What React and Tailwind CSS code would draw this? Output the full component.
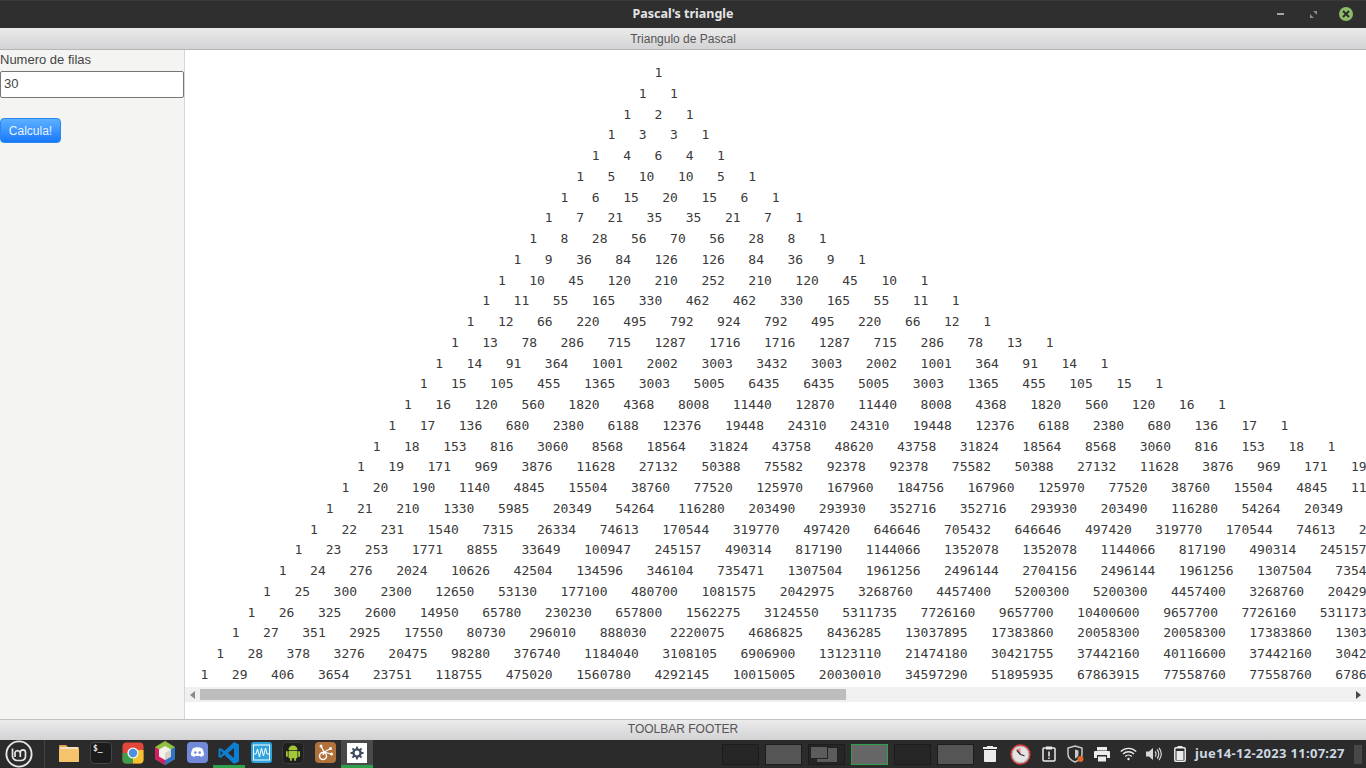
import React from 'react';

// pascal rows, padded so the triangle is centered like the original text output
const buildRows = (total) => {
  const rows = [];
  let row = [1];
  for (let i = 0; i < total; i++) {
    rows.push(' '.repeat((total - 1 - i) * 2) + row.join('   '));
    const next = [1];
    for (let j = 1; j < row.length; j++) next.push(row[j - 1] + row[j]);
    next.push(1);
    row = next;
  }
  return rows;
};

const MintLogo = () => (
  <svg width="28" height="28" viewBox="0 0 28 28" fill="none" stroke="#e6e6e6">
    <circle cx="14" cy="14" r="12.6" strokeWidth="1.9" />
    <path d="M7.500 8.500v7.500a4.500 4.500 0 0 0 4.500 4.500h4.500a4.500 4.500 0 0 0 4-4.500v-3.500a2.600 2.600 0 0 0-5.200 0v4.500M15 12.500a2.600 2.600 0 0 0-5 0v4.500" strokeWidth="1.700" />
  </svg>
);

const FolderIcon = () => (
  <svg width="22" height="20" viewBox="0 0 22 20">
    <path d="M1 3a1 1 0 0 1 1-1h6l2 2h10a1 1 0 0 1 1 1v13a1 1 0 0 1-1 1H2a1 1 0 0 1-1-1z" fill="#e0a556" />
    <rect x="2" y="4" width="18" height="2" fill="#f3e3c4" />
    <rect x="1" y="6" width="20" height="13" rx="1" fill="#f6c36d" />
  </svg>
);

const TerminalIcon = () => (
  <div className="w-[22px] h-[22px] rounded-[4px] bg-[#1c1c1c] border border-[#454545] pl-[2px] text-[8px] leading-[12px] font-bold text-[#e8e8e8] font-['DejaVu_Sans_Mono',monospace]">
    $_
  </div>
);

const ChromeIcon = () => (
  <svg width="22" height="22" viewBox="0 0 22 22">
    <rect x="0.5" y="0.5" width="21" height="21" rx="4" fill="#e0483b" />
    <path d="M0.5 11v6.5a4 4 0 0 0 4 4H11L11 11z" fill="#3f9d4a" />
    <path d="M11 11v10.5h6.5a4 4 0 0 0 4-4V8H11z" fill="#f4c430" />
    <circle cx="11" cy="11" r="5.6" fill="#f2f2f2" />
    <circle cx="11" cy="11" r="4.2" fill="#4d8fe0" />
  </svg>
);

const BoxIcon = () => (
  <svg width="22" height="24" viewBox="0 0 22 24">
    <path d="M11 0l10 6v12l-10 6-10-6V6z" fill="#8fbf3f" />
    <path d="M1 6l10 6v12l-10-6z" fill="#d11f62" />
    <path d="M21 6l-10 6v12l10-6z" fill="#2e74c9" />
    <path d="M11 5l6 3.5v7L11 19l-6-3.5v-7z" fill="#f4f1ea" />
    <path d="M11 12l6-3.5v7L11 19z" fill="#d9d3c6" />
  </svg>
);

const DiscordIcon = () => (
  <svg width="21" height="21" viewBox="0 0 21 21">
    <rect width="21" height="21" rx="4" fill="#7289da" />
    <path d="M6 6.2c3-1.3 6-1.3 9 0 1.3 2 2 4.2 2 7-1 .9-2.1 1.4-3.2 1.7l-.8-1.2c-1.700.5-3.300.5-5 0l-.8 1.200C6.100 14.600 5 14.100 4 13.200c0-2.800.7-5 2-7z" fill="#fff" />
    <circle cx="8.300" cy="10.600" r="1.300" fill="#7289da" />
    <circle cx="12.700" cy="10.600" r="1.300" fill="#7289da" />
  </svg>
);

const VsCodeIcon = () => (
  <svg width="22" height="22" viewBox="0 0 22 22">
    <path d="M16 0l5 2.500v17L16 22 6.500 13 2.500 16 .5 15V7l2-1 4 3z" fill="#0e7fd0" />
    <path d="M16 6l-6 5 6 5z" fill="#2b2b2b" />
    <path d="M2.500 8.500v5L5 11z" fill="#2b2b2b" />
  </svg>
);

const WaveIcon = () => (
  <svg width="21" height="21" viewBox="0 0 21 21" fill="none">
    <rect width="21" height="21" rx="3" fill="#2ea3dc" />
    <rect x="2.500" y="3" width="16" height="15" stroke="#fff" strokeWidth="1" />
    <path d="M3 12h2l1.500-5 2 8 2-9 2 8 2-8 1.500 6h2" stroke="#fff" strokeWidth="1" />
  </svg>
);

const AndroidIcon = () => (
  <svg width="22" height="22" viewBox="0 0 22 22">
    <rect x="0.500" y="0.500" width="21" height="21" rx="4" fill="#1f1f1f" stroke="#3a3a3a" />
    <g fill="#a4c639">
      <path d="M6.500 8a4.500 4.500 0 0 1 9 0z" />
      <rect x="6.500" y="8.800" width="9" height="7.500" rx="1" />
      <rect x="4" y="9" width="1.800" height="6" rx="0.900" />
      <rect x="16.200" y="9" width="1.800" height="6" rx="0.900" />
      <rect x="8" y="15" width="1.800" height="4" rx="0.900" />
      <rect x="12.200" y="15" width="1.800" height="4" rx="0.900" />
    </g>
  </svg>
);

const NodesIcon = () => (
  <svg width="21" height="21" viewBox="0 0 21 21" fill="none">
    <rect width="21" height="21" rx="4" fill="#b0713a" />
    <path d="M6 4l3 6 6-3M9 10l7 2M9 10l-1 3" stroke="#fff" strokeWidth="1.300" />
    <circle cx="6" cy="4" r="1.500" fill="#fff" />
    <circle cx="15.500" cy="6.500" r="1.500" fill="#fff" />
    <circle cx="16.500" cy="12" r="1.500" fill="#fff" />
    <circle cx="8" cy="14" r="3.500" stroke="#fff" strokeWidth="1.500" />
  </svg>
);

const GearTile = () => (
  <div className="w-[20px] h-[20px] bg-white flex items-center justify-center">
    <svg width="14" height="14" viewBox="0 0 14 14" fill="none">
      <circle cx="7" cy="7" r="3.600" stroke="#3f4b5e" strokeWidth="2.400" />
      <path d="M7 .5v2.500M7 11v2.500M.5 7H3M11 7h2.500M2.400 2.400l1.800 1.800M9.800 9.800l1.800 1.800M2.400 11.600l1.800-1.800M9.800 4.200l1.800-1.800" stroke="#3f4b5e" strokeWidth="1.800" />
    </svg>
  </div>
);

const TrashIcon = () => (
  <svg width="14" height="16" viewBox="0 0 14 16" fill="#ececec">
    <rect x="0" y="1" width="14" height="2" />
    <rect x="4" y="0" width="6" height="1.500" />
    <path d="M1 4h12v11a1 1 0 0 1-1 1H2a1 1 0 0 1-1-1z" />
  </svg>
);

const ClockIcon = () => (
  <svg width="21" height="21" viewBox="0 0 21 21" fill="none">
    <circle cx="10.500" cy="10.500" r="9.500" fill="#e4e4e4" stroke="#e0333a" strokeWidth="1.300" />
    <circle cx="10.500" cy="10.500" r="8.300" stroke="#9a9a9a" strokeWidth="0.800" />
    <path d="M10.500 10.500L5.500 6a7 7 0 0 1 5-2z" fill="#e88a88" />
    <path d="M10.500 10.500L7 6.500M10.500 10.500l4 1.200" stroke="#2a2a2a" strokeWidth="1.200" />
  </svg>
);

const ClipboardIcon = () => (
  <svg width="14" height="16" viewBox="0 0 14 16" fill="none">
    <rect x="1" y="2" width="12" height="13" rx="1" stroke="#ececec" strokeWidth="1.500" />
    <rect x="4" y="0.500" width="6" height="3" fill="#ececec" />
    <path d="M7 5.500v5M7 11.500v1.500" stroke="#ececec" strokeWidth="1.500" />
  </svg>
);

const ShieldIcon = () => (
  <svg width="18" height="18" viewBox="0 0 18 18" fill="none">
    <path d="M8 1l7 2v6c0 4-3 6.500-7 8-4-1.500-7-4-7-8V3z" stroke="#c9c9c9" strokeWidth="1.500" />
    <path d="M8 4.500l3.500 1v3.500c0 2-1.500 3.500-3.500 4.500z" fill="#c9c9c9" />
    <circle cx="13.500" cy="14" r="3" fill="#e0692a" />
  </svg>
);

const PrinterIcon = () => (
  <svg width="16" height="15" viewBox="0 0 16 15" fill="#ececec">
    <rect x="3" y="0" width="10" height="3.500" />
    <path d="M0 5a1 1 0 0 1 1-1h14a1 1 0 0 1 1 1v6h-3V8H3v3H0z" />
    <rect x="4" y="9.500" width="8" height="5" />
  </svg>
);

const WifiIcon = () => (
  <svg width="17" height="14" viewBox="0 0 17 14" fill="none" stroke="#ececec" strokeWidth="1.400">
    <path d="M.8 4.500a11 11 0 0 1 15.400 0M3 7a8 8 0 0 1 11 0M5.200 9.400a4.800 4.800 0 0 1 6.600 0" />
    <circle cx="8.500" cy="12" r="1.200" fill="#ececec" stroke="none" />
  </svg>
);

const VolumeIcon = () => (
  <svg width="16" height="14" viewBox="0 0 16 14" fill="none">
    <path d="M0 4.500h3L7 1v12L3 9.500H0z" fill="#d8d8d8" />
    <path d="M9 4.500a3.500 3.500 0 0 1 0 5M11 2.500a6.500 6.500 0 0 1 0 9M13 1a9 9 0 0 1 0 12" stroke="#d8d8d8" strokeWidth="1.200" />
  </svg>
);

const BatteryIcon = () => (
  <svg width="12" height="16" viewBox="0 0 12 16" fill="none">
    <rect x="3.500" y="0" width="5" height="2" fill="#ececec" />
    <rect x="0.800" y="1.800" width="10.400" height="13.400" rx="1" stroke="#ececec" strokeWidth="1.500" />
    <rect x="2.500" y="5" width="7" height="9" fill="#ececec" />
  </svg>
);

const launchers = [
  { id: 'files', icon: <FolderIcon /> },
  { id: 'term', icon: <TerminalIcon /> },
  { id: 'chrome', icon: <ChromeIcon /> },
  { id: 'box', icon: <BoxIcon /> },
  { id: 'discord', icon: <DiscordIcon /> },
  { id: 'code', icon: <VsCodeIcon />, running: true },
  { id: 'wave', icon: <WaveIcon /> },
  { id: 'android', icon: <AndroidIcon /> },
  { id: 'nodes', icon: <NodesIcon /> },
  { id: 'app', icon: <GearTile />, running: true, active: true },
];

const workspaces = [
  'bg-[#262626]',
  'bg-[#555555]',
  'overlap',
  'bg-[#666666] border-[#2ea04a]',
  'bg-[#262626]',
  'bg-[#555555]',
];

const trayIcons = [
  { id: 'clock', icon: <ClockIcon />, width: 'w-[29px]' },
  { id: 'clip', icon: <ClipboardIcon />, width: 'w-[28px]' },
  { id: 'shield', icon: <ShieldIcon />, width: 'w-[26px]' },
  { id: 'print', icon: <PrinterIcon />, width: 'w-[26px]' },
  { id: 'wifi', icon: <WifiIcon />, width: 'w-[26px]' },
  { id: 'vol', icon: <VolumeIcon />, width: 'w-[25px]' },
  { id: 'bat', icon: <BatteryIcon />, width: 'w-[27px]' },
];

export default function App() {
  const rows = buildRows(30);

  return (
    <div className="w-[1366px] h-[768px] overflow-hidden flex flex-col font-['Liberation_Sans',sans-serif]">
      {/* window title */}
      <div className="h-[28px] shrink-0 bg-[#2f2f2f] border-t border-[#3a3a3a] flex items-center relative">
        <div className="w-full text-center text-[12.500px] font-bold text-[#e4e4e4] font-['Noto_Sans',sans-serif]">Pascal's triangle</div>
        <div className="absolute right-[13px] top-[6px] flex items-center">
          <div className="w-[7px] h-[2px] bg-[#a5a5a5]" />
          <svg className="ml-[26px]" width="7" height="7" viewBox="0 0 7 7" fill="#8c8c8c"><path d="M3 0h4v4zM0 3l4 4H0z" /></svg>
          <div className="ml-[22px] w-[14px] h-[14px] rounded-full bg-[#8dbb68] flex items-center justify-center">
            <svg width="8" height="8" viewBox="0 0 8 8" stroke="#2a2a2a" strokeWidth="1.800"><path d="M1 1l6 6M7 1L1 7" /></svg>
          </div>
        </div>
      </div>

      {/* toolbar */}
      <div className="h-[22px] shrink-0 bg-gradient-to-b from-[#ecebec] to-[#d3d2d4] border-b border-[#b5b5b5] flex items-center justify-center text-[12px] text-[#555555]">
        Triangulo de Pascal
      </div>

      <div className="flex-1 flex min-h-0">
        {/* form */}
        <div className="w-[185px] shrink-0 bg-[#f4f4f3] border-r border-[#d6d6d6]">
          <div className="text-[13px] text-[#444444] leading-[15px] mt-[2px]">Numero de filas</div>
          <input
            readOnly
            value="30"
            className="block mt-[4px] w-[184px] h-[27px] bg-white border border-[#767676] rounded-[2px] pl-[3px] pb-[2px] text-[13px] text-[#444444] outline-none"
          />
          <button className="block mt-[20px] w-[61px] h-[25px] rounded-[4px] border border-[#2a86f0] bg-gradient-to-b from-[#5cb0ff] to-[#1678fb] text-[12px] text-[#e8f3ff]">
            Calcula!
          </button>
        </div>

        {/* result */}
        <div className="flex-1 min-w-0 bg-white flex flex-col">
          <div className="h-[637px] overflow-hidden pt-[13px] pl-[15.500px]">
            {rows.map((line, i) => (
              <div key={i} className="h-[20.760px] leading-[20.760px] whitespace-pre text-[13px] text-[#3a3a3a] font-['DejaVu_Sans_Mono',monospace]">{line}</div>
            ))}
          </div>
          <div className="h-[15px] shrink-0 bg-[#f0f0f0] flex items-center">
            <div className="w-[15px] flex justify-center">
              <svg width="5" height="8" viewBox="0 0 5 8" fill="#8a8a8a"><path d="M5 0v8L0 4z" /></svg>
            </div>
            <div className="w-[646px] h-[11px] bg-[#bdbdbd]" />
            <div className="ml-auto w-[15px] flex justify-center">
              <svg width="5" height="8" viewBox="0 0 5 8" fill="#4a4a4a"><path d="M0 0v8l5-4z" /></svg>
            </div>
          </div>
          <div className="flex-1" />
        </div>
      </div>

      {/* footer */}
      <div className="h-[21px] shrink-0 bg-gradient-to-b from-[#ecebec] to-[#d3d2d4] border-t border-[#c2c2c2] flex items-center justify-center pb-[2px] text-[12px] text-[#555555]">
        TOOLBAR FOOTER
      </div>

      {/* panel */}
      <div className="h-[28px] shrink-0 bg-[#2b2b2b] flex items-center">
        <div className="w-[45px] h-full flex items-center pl-[5px] border-r border-[#444444]">
          <MintLogo />
        </div>
        <div className="ml-[8px] flex h-full">
          {launchers.map((item) => (
            <div
              key={item.id}
              className={`w-[32px] h-full flex items-center justify-center border-b-[3px] ${item.running ? 'border-[#2ea04a]' : 'border-transparent'} ${item.active ? 'bg-[#4a4a4a]' : ''}`}
            >
              {item.icon}
            </div>
          ))}
        </div>

        <div className="ml-[349px] flex items-center gap-[6px]">
          {workspaces.map((ws, i) =>
            ws === 'overlap' ? (
              <div key={i} className="w-[37px] h-[21px] bg-[#262626] border border-[#1c1c1c] relative">
                <div className="absolute left-[7px] top-[2px] w-[22px] h-[16px] bg-[#5c5c5c] border border-[#222222]" />
                <div className="absolute left-[1px] top-[1px] w-[18px] h-[13px] bg-[#5c5c5c] border border-[#222222]" />
              </div>
            ) : (
              <div key={i} className={`w-[37px] h-[21px] border ${ws.includes('border-') ? ws : `${ws} border-[#1c1c1c]`}`} />
            )
          )}
        </div>

        <div className="ml-[9px] w-[14px] flex justify-center"><TrashIcon /></div>
        <div className="ml-[9px] flex items-center">
          {trayIcons.map((t) => (
            <div key={t.id} className={`${t.width} flex justify-center`}>{t.icon}</div>
          ))}
        </div>
        <div className="ml-[2px] text-[13px] font-bold text-[#cdd8e3] tracking-[0.300px] whitespace-pre font-['Noto_Sans',sans-serif]">jue14-12-2023 11:07:27</div>
        <div className="ml-auto mr-[4px] w-[8px] h-[19px] bg-[#474747]" />
      </div>
    </div>
  );
}
